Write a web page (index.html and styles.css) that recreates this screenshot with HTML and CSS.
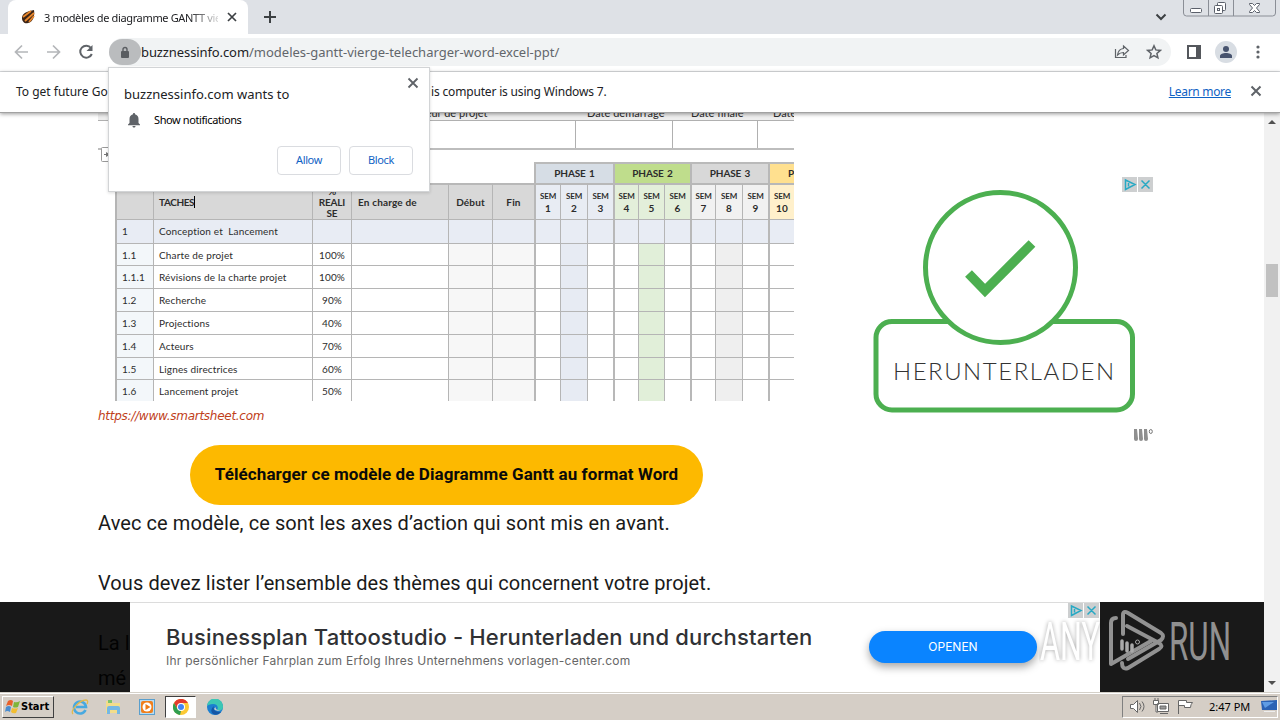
FILE: index.html
```html
<!DOCTYPE html>
<html lang="fr">
<head>
    <meta charset="UTF-8">
    <title>3 modèles de diagramme GANTT vierge</title>
    <link rel="stylesheet" href="styles.css">
</head>
<body>
    <div class="tabstrip">
        <div class="tab">
            <svg class="favicon" width="14" height="16" viewBox="0 0 14 16"><path d="M1 9C1 4 7 2 13 1c1 6-1 12-6 13-3 1-6-1-6-5z" fill="#3b2416"/><path d="M2 8l8-6M4 12l9-8M8 13l5-6" stroke="#e8872d" stroke-width="1.8"/></svg>
            <span class="tab-title">3 modèles de diagramme GANTT vier</span>
            <svg class="tab-close" width="10" height="10" viewBox="0 0 10 10"><path d="M1 1l8 8M9 1L1 9" stroke="#3c4043" stroke-width="1.7"/></svg>
        </div>
        <svg class="tab-new" width="12" height="12" viewBox="0 0 12 12"><path d="M6 0v12M0 6h12" stroke="#3c4043" stroke-width="2"/></svg>
        <svg class="tab-search" width="12" height="8" viewBox="0 0 12 8"><path d="M1.5 1.5L6 6l4.500-4.500" fill="none" stroke="#3c4043" stroke-width="2"/></svg>
        <svg class="win-buttons" width="94" height="18" viewBox="0 0 94 18">
            <path d="M.5 0v13q0 3 3 3h86q3 0 3-3V0M25.500 0v16M50.500 0v16" fill="none" stroke="#8a8e96"/>
            <g fill="#fff" stroke="#5b606b">
                <rect x="7.500" y="8.500" width="11" height="4" rx="1"/>
                <rect x="34.500" y="2.500" width="8" height="8" rx="1"/>
                <rect x="31.500" y="5.500" width="8" height="8" rx="1"/>
                <rect x="34.500" y="8.500" width="2" height="2"/>
                <path d="M66.500 3.500h3l2 2 2-2h3v1L73.500 8l3 3.500v1h-3l-2-2-2 2h-3v-1l3-3.500-3-3.500z"/>
            </g>
        </svg>
    </div>

    <div class="toolbar">
        <svg class="nav-icons" width="84" height="16" viewBox="0 0 84 16">
            <path d="M14 8H1.500M8 1.500L1.500 8 8 14.500M33 8h12.500M39 1.500L45.500 8 39 14.500" fill="none" stroke="#b4b6b9" stroke-width="1.700"/>
            <path d="M77 4A6 6 0 1 0 77.800 10" fill="none" stroke="#5f6368" stroke-width="2"/>
            <path d="M78.500 1v6h-6z" fill="#5f6368"/>
        </svg>
        <div class="omnibox">
            <span class="lock"><svg width="10" height="13" viewBox="0 0 10 13"><rect x="1" y="5" width="8" height="7" rx="1" fill="#5a5d61"/><path d="M3 5V3.500a2 2 0 0 1 4 0V5" fill="none" stroke="#5a5d61" stroke-width="1.400"/></svg></span>
            <span class="url"><b>buzznessinfo.com</b>/modeles-gantt-vierge-telecharger-word-excel-ppt/</span>
            <svg class="share" width="16" height="16" viewBox="0 0 16 16"><path d="M1.500 5v8.500H12V11" fill="none" stroke="#5f6368" stroke-width="1.200"/><path d="M9.500 2l5 4.500-5 4.500V8.500c-3 0-4.500 1-6 2.500.5-3.500 2-6 6-6.500z" fill="none" stroke="#5f6368" stroke-width="1.200"/></svg>
            <svg class="star" width="16" height="16" viewBox="0 0 16 16"><path d="M8 1.800l1.800 4.100 4.500.5-3.400 3 1 4.400L8 11.500l-3.900 2.300 1-4.400-3.400-3 4.500-.5z" fill="none" stroke="#5f6368" stroke-width="1.500"/></svg>
        </div>
        <svg class="side-panel" width="14" height="14" viewBox="0 0 14 14"><rect x="1" y="1" width="12" height="12" fill="none" stroke="#54575c" stroke-width="2"/><path d="M9 1h4v12H9z" fill="#54575c"/></svg>
        <span class="avatar"><svg width="14" height="14" viewBox="0 0 14 14"><circle cx="7" cy="4" r="3" fill="#47536e"/><path d="M1 13v-2c0-2 3-3 6-3s6 1 6 3v2z" fill="#47536e"/></svg></span>
        <svg class="menu-dots" width="4" height="14" viewBox="0 0 4 14" fill="#5f6368"><circle cx="2" cy="2" r="1.600"/><circle cx="2" cy="7" r="1.600"/><circle cx="2" cy="12" r="1.600"/></svg>
    </div>

    <div class="infobar">
        <span class="info-start">To get future Go</span>
        <span class="info-end">is computer is using Windows 7.</span>
        <a class="learn">Learn more</a>
        <svg width="12" height="12" viewBox="0 0 12 12"><path d="M1.500 1.500l9 9M10.500 1.500l-9 9" stroke="#5f6368" stroke-width="2"/></svg>
    </div>

    <div class="popup">
        <svg class="popup-close" width="12" height="12" viewBox="0 0 12 12"><path d="M1.500 1.500l9 9M10.500 1.500l-9 9" stroke="#5f6368" stroke-width="1.800"/></svg>
        <div class="popup-title">buzznessinfo.com wants to</div>
        <div class="popup-row">
            <svg width="12" height="15" viewBox="0 0 12 15"><path d="M6 0c.8 0 1 .6 1 1.200 2.300.6 3.500 2.300 3.500 4.800v4l1.500 1.500v.8H0v-.8L1.500 10V6C1.500 3.500 2.700 1.800 5 1.200 5 .6 5.200 0 6 0zM4.500 13h3c0 1-.7 1.600-1.500 1.600S4.500 14 4.500 13z" fill="#5f6368"/></svg>
            <span>Show notifications</span>
        </div>
        <div class="popup-buttons">
            <button>Allow</button>
            <button>Block</button>
        </div>
    </div>

    <div class="viewport">
        <div class="page">
            <div class="article">
                <div class="figure">
                    <div class="project-labels">
                        <span class="pl-1">Directeur de projet</span>
                        <span class="pl-2">Date démarrage</span>
                        <span class="pl-3">Date finale</span>
                        <span class="pl-4">Date</span>
                    </div>
                    <div class="project-cells"><i></i><i></i><i></i><i></i></div>
                    <div class="anchor-line"><svg width="10" height="16" viewBox="0 0 10 16"><rect x=".5" y=".5" width="14" height="14" rx="1" fill="#fff" stroke="#999"/><path d="M3 7.500h4" stroke="#777"/><path d="M5 5l4 2.500L5 10z" fill="#777"/></svg></div>
                    <div class="phases">
                        <div class="phase blue">PHASE 1</div>
                        <div class="phase green">PHASE 2</div>
                        <div class="phase grey">PHASE 3</div>
                        <div class="phase yellow">P</div>
                    </div>
                    <div class="gantt" id="gantt"></div>
                </div>
                <div class="caption">https://www.smartsheet.com</div>
                <a class="download"><span>Télécharger ce modèle de Diagramme Gantt au format Word</span></a>
                <p>Avec ce modèle, ce sont les axes d’action qui sont mis en avant.</p>
                <p>Vous devez lister l’ensemble des thèmes qui concernent votre projet.</p>
                <p>La l<br>mé</p>
            </div>
            <div class="side-ad">
                <div class="ad-badges">
                    <svg width="31" height="15" viewBox="0 0 31 15"><path d="M0 0h15v15H0zM16 0h15v15H16z" fill="#cdcfd0"/><path d="M3.500 3v9.500l9.500-5zM6.500 6v3.500M19.500 3.500l8 8M27.500 3.500l-8 8" fill="none" stroke="#27a9c4" stroke-width="1.500"/></svg>
                </div>
                <svg class="ad-art" width="262" height="224" viewBox="0 0 262 224">
                    <rect x="3" y="132.500" width="256.500" height="88.500" rx="16" fill="#fff" stroke="#4caf50" stroke-width="5"/>
                    <circle cx="127.500" cy="78.500" r="75" fill="#fff" stroke="#4caf50" stroke-width="5"/>
                    <path d="M95.500 84.500l16.500 17 47-47" fill="none" stroke="#4caf50" stroke-width="9.500"/>
                    <text x="20" y="191" textLength="221">HERUNTERLADEN</text>
                </svg>
                <svg class="ad-mark" width="22" height="15" viewBox="0 0 22 15"><path d="M2 1h3l1 10q0 2-2 2t-2-2zM7 1h3l1 10q0 2-2 2t-2-2zM12 1h3l1 10q0 2-2 2t-2-2z" fill="#8f8f8f"/><ellipse cx="18.800" cy="3.500" rx="1.500" ry="2" fill="none" stroke="#777"/></svg>
            </div>
            <div class="banner-wrap">
                <div class="banner">
                    <div class="banner-text">
                        <div class="banner-title">Businessplan Tattoostudio - Herunterladen und durchstarten</div>
                        <div class="banner-sub">Ihr persönlicher Fahrplan zum Erfolg Ihres Unternehmens vorlagen-center.com</div>
                    </div>
                    <button class="open">OPENEN</button>
                    <svg class="banner-badges" width="31" height="15" viewBox="0 0 31 15"><path d="M0 0h15v15H0zM16 0h15v15H16z" fill="#cdcfd0"/><path d="M3.500 3v9.500l9.500-5zM6.500 6v3.500M19.500 3.500l8 8M27.500 3.500l-8 8" fill="none" stroke="#27a9c4" stroke-width="1.500"/></svg>
                </div>
            </div>
            <svg class="watermark" width="194" height="66" viewBox="0 0 194 66">
                <text class="wm-any" x="1" y="52" textLength="60" lengthAdjust="spacingAndGlyphs">ANY</text>
                <text class="wm-run" x="130" y="52" textLength="62" lengthAdjust="spacingAndGlyphs">RUN</text>
                <g fill="none" stroke="#929292" stroke-width="4" stroke-linejoin="round" stroke-linecap="round">
                    <path d="M77 10q-5 0-5 5v41l40-23"/>
                    <path d="M84 26V7q0-5 5-2l33 20q4 3 0 7L89 51"/>
                    <path d="M88 18l32 17q5 3 0 6L89 60q-6 2-6-5"/>
                </g>
                <path d="M83 33v8M88 35v8M93 37v6" stroke="#aaa" stroke-width="3.500" stroke-linecap="round"/>
                <circle cx="98.500" cy="34" r="2" fill="none" stroke="#aaa"/>
            </svg>
        </div>
        <div class="scrollbar">
            <i class="up"></i>
            <div class="thumb"></div>
            <i class="down"></i>
        </div>
    </div>

    <div class="taskbar">
        <div class="start">
            <svg width="16" height="15" viewBox="0 0 16 15"><path d="M3 2q3-2 5 0L7 7Q4 5 1 7z" fill="#e9602a"/><path d="M9 3q3 1 6-1l-2 6q-3 1-5 0z" fill="#7fb539"/><path d="M1 8q3-2 5 0l-1 5q-3-2-5 0z" fill="#4a8ccf"/><path d="M7 9q3 1 6 0l-2 5q-3 1-5-1z" fill="#f2bd30"/></svg>
            <span>Start</span>
        </div>
        <svg class="t-ie" width="18" height="18" viewBox="0 0 18 18"><path d="M14.500 12A6 6 0 1 1 15 9H5" fill="none" stroke="#48a9e0" stroke-width="2.600"/><path d="M2 16C-1 13 8 2 15 2c2 0 2 2 1 4" fill="none" stroke="#e3b94c" stroke-width="1.300"/></svg>
        <svg class="t-files" width="17" height="16" viewBox="0 0 17 16"><path d="M1 2h6l1 2h7v10H1z" fill="#f3dd8a"/><path d="M3 1h4v3H3z" fill="#7ec36a"/><path d="M2 15V9q0-2 2-2h9q2 0 2 2v6h-3v-4H5v4z" fill="#75b8e4"/></svg>
        <svg class="t-media" width="16" height="16" viewBox="0 0 16 16"><rect x=".5" y=".5" width="15" height="15" fill="#b9dcf2" stroke="#5a9fcd"/><rect x="2" y="2" width="12" height="12" rx="2" fill="#f07f1c"/><circle cx="8" cy="8" r="4.500" fill="#fff"/><path d="M6.500 5l5 3-5 3z" fill="#ed7b16"/></svg>
        <div class="t-active">
            <svg width="16" height="16" viewBox="0 0 16 16"><circle cx="8" cy="8" r="8" fill="#fcc934"/><path d="M1 4a8 8 0 0 1 14 0H8L4.500 10z" fill="#e33b2e"/><path d="M1 4l3.500 6L8 12l-1 4A8 8 0 0 1 1 4z" fill="#2f9e4f"/><circle cx="8" cy="8" r="4" fill="#fff"/><circle cx="8" cy="8" r="3" fill="#4285f4"/></svg>
        </div>
        <svg class="t-edge" width="16" height="16" viewBox="0 0 16 16"><circle cx="8" cy="8" r="8" fill="#1c7fd0"/><path d="M0 7a8 8 0 0 1 16 1c0 3-3 4-6 3 2-3 0-6-4-6-3 0-5 1-6 2z" fill="#3cc7b4"/><path d="M7 7q-2 6 7 6-3 4-8 2-4-4 1-8z" fill="#1556a5"/><path d="M8.500 8q0 4 6.500 3-6 2-8-1z" fill="#d5cec6"/></svg>
        <div class="tray">
            <svg width="75" height="18" viewBox="0 0 75 18" fill="#fff" stroke="#666">
                <path d="M2.500 6.500h3l4-4v12l-4-4h-3z"/><path d="M11.500 5q3 3.500 0 7M14 3.500q4 5 0 10" fill="none"/>
                <path d="M29.500 5.500h11v8h-11zM32 15.500h8M25.500 2.500h5v4h-5zM28 7v7h2M27 0v3M30 0v3"/><path d="M32 8h6v3h-6z" fill="#999"/>
                <path d="M50.500 16V2.500h8v2h6q-2 2-2 5h-6v-2h-6"/>
            </svg>
            <span>2:47 PM</span>
            <svg class="desk" width="16" height="13" viewBox="0 0 16 13"><path d="M0 1l16-1v10H1z" fill="#2b62b4"/><path d="M1 2h12L4 8z" fill="#5f9ce4"/><path d="M3 11h11v1H3z" fill="#eee"/></svg>
        </div>
    </div>

    <script>
        const gantt = document.getElementById('gantt');
        const rows = [
            ['1', 'Conception et&nbsp; Lancement', ''],
            ['1.1', 'Charte de projet', '100%'],
            ['1.1.1', 'Révisions de la charte projet', '100%'],
            ['1.2', 'Recherche', '90%'],
            ['1.3', 'Projections', '40%'],
            ['1.4', 'Acteurs', '70%'],
            ['1.5', 'Lignes directrices', '60%'],
            ['1.6', 'Lancement projet', '50%']
        ];

        let html = '';
        ['', '<span class="typed">TACHES</span>', '%<br>REALI<br>SE', 'En charge de', 'Début', 'Fin'].forEach((t, i) => {
            html += `<div class="cell head h${i}">${t}</div>`;
        });
        for (let s = 1; s <= 10; s++) {
            html += `<div class="cell sem g${Math.ceil(s / 3)} ${s % 3 === 1 ? 'thick' : ''}"><small>SEM</small>${s}</div>`;
        }
        rows.forEach((row, r) => {
            for (let c = 0; c < 16; c++) {
                let cls = 'cell c' + c;
                if (r === 0) cls += ' summary';
                if (c >= 6 && c % 3 === 0) cls += ' thick';
                html += `<div class="${cls}"><span>${row[c] || ''}</span></div>`;
            }
        });
        gantt.innerHTML = html;
    </script>
</body>
</html>
```
FILE: styles.css
```css
*{
    margin: 0;
    padding: 0;
    box-sizing: border-box;
}
body{
    width: 1280px;
    height: 720px;
    overflow: hidden;
    position: relative;
    display: flex;
    flex-direction: column;
    background-color: #fff;
    font-family: "Noto Sans", sans-serif;
    font-size: 12px;
    color: #202124;
}
svg{
    display: block;
    flex: none;
}
span, div, a, button{
    white-space: nowrap;
}

/* browser window */
.tabstrip{
    height: 34px;
    flex: none;
    background-color: #dee1e6;
    display: flex;
    align-items: center;
}
.tab{
    width: 240px;
    height: 34px;
    margin-left: 8px;
    border-radius: 8px 8px 0 0;
    background-color: #fff;
    display: flex;
    align-items: center;
}
.favicon{
    margin-left: 13px;
}
.tab-title{
    width: 174px;
    margin-left: 9px;
    overflow: hidden;
    font-size: 11px;
    letter-spacing: -0.35px;
    -webkit-mask-image: linear-gradient(to right, #000 145px, transparent 180px);
}
.tab-close{
    margin-left: 9px;
}
.tab-new{
    margin-left: 16px;
}
.tab-search{
    margin-left: 879px;
}
.win-buttons{
    margin-left: 16px;
    align-self: flex-start;
}
.toolbar{
    height: 38px;
    flex: none;
    display: flex;
    align-items: center;
    padding-bottom: 1px;
    border-bottom: 1px solid #dcdee1;
}
.nav-icons{
    margin-left: 14px;
}
.omnibox{
    width: 1062px;
    height: 28px;
    margin-left: 11px;
    border-radius: 14px;
    background-color: #f1f3f4;
    display: flex;
    align-items: center;
}
.lock{
    width: 32px;
    height: 26px;
    border-radius: 13px;
    background-color: #babcbe;
    display: flex;
    align-items: center;
    justify-content: center;
}
.url{
    width: 973px;
    font-size: 13px;
    color: #62666b;
}
.url b{
    font-weight: 400;
    color: #202124;
    letter-spacing: -0.1px;
}
.star{
    margin-left: 16px;
}
.side-panel{
    margin-left: 16px;
}
.avatar{
    width: 22px;
    height: 22px;
    margin-left: 14px;
    border-radius: 50%;
    background-color: #d8dde3;
    display: flex;
    align-items: center;
    justify-content: center;
}
.menu-dots{
    margin-left: 19px;
}
.infobar{
    height: 41px;
    flex: none;
    display: flex;
    align-items: center;
    padding: 0 18px 2px 16px;
    border-bottom: 1px solid #a2a2a2;
    box-shadow: 0 1px 4px rgba(0,0,0,0.4);
    position: relative;
    z-index: 2;
    background-color: #fff;
    letter-spacing: -0.17px;
}
.info-start{
    width: 415px;
    letter-spacing: 0;
}
.learn{
    margin-left: auto;
    margin-right: 19px;
    color: #0f62c4;
    text-decoration: underline;
    letter-spacing: -0.3px;
}

/* permission bubble, lies over the page */
.popup{
    position: absolute;
    left: 108px;
    top: 67px;
    z-index: 5;
    width: 322px;
    height: 125px;
    padding: 17px 16px 17px 15px;
    background-color: #fff;
    border: 1px solid #d2d4d6;
    box-shadow: 0 1px 3px rgba(0,0,0,0.15);
}
.popup-close{
    position: absolute;
    right: 10px;
    top: 9px;
}
.popup-title{
    font-size: 13px;
    line-height: 18px;
}
.popup-row{
    display: flex;
    align-items: center;
    gap: 14px;
    height: 16px;
    margin: 9px 0 0 4px;
    font-size: 11px;
    letter-spacing: -0.4px;
    color: #000;
}
.popup-row span{
    padding-bottom: 2px;
}
.popup-buttons{
    display: flex;
    justify-content: flex-end;
    gap: 8px;
    margin-top: 18px;
}
.popup-buttons button{
    width: 64px;
    height: 29px;
    padding-bottom: 2px;
    border: 1px solid #dadce0;
    border-radius: 4px;
    background-color: #fff;
    font: 11px "Noto Sans", sans-serif;
    letter-spacing: -0.4px;
    color: #0f62c4;
}

/* page */
.viewport{
    height: 579px;
    flex: none;
    display: flex;
}
.page{
    width: 1264px;
    height: 579px;
    position: relative;
    overflow: hidden;
    display: flex;
}
.article{
    width: 696px;
    margin-left: 98px;
    font-family: Roboto, sans-serif;
}
.figure{
    height: 288px;
    overflow: hidden;
    font-family: Lato, sans-serif;
    font-size: 10px;
    color: #2c2c2c;
}
.project-labels{
    height: 7px;
    display: grid;
    grid-template-columns: 477px 97px 85px 37px;
    background-color: #eee;
    line-height: 12px;
    font-size: 11px;
}
.project-labels span{
    margin-top: -6px;
}
.pl-1{
    padding-left: 298px;
}
.pl-2{
    padding-left: 12px;
}
.pl-3{
    padding-left: 19px;
}
.pl-4{
    padding-left: 16px;
}
.project-cells{
    height: 30px;
    display: grid;
    grid-template-columns: 477px 97px 85px 37px;
    border-top: 1px solid #b0b0b0;
    border-bottom: 2px solid #bdbdbd;
}
.project-cells i + i{
    border-left: 1px solid #b0b0b0;
}
.anchor-line{
    height: 12px;
    padding-left: 3px;
    margin-top: -3px;
    margin-bottom: 3px;
}
.phases{
    height: 21px;
    margin-left: 436px;
    display: grid;
    grid-template-columns: 79px 77px 78px 26px;
    border-top: 2px solid #bababa;
}
.phase{
    border-left: 2px solid #b8b8b8;
    padding-bottom: 2px;
    display: flex;
    align-items: center;
    justify-content: center;
    font-weight: 700;
    letter-spacing: -0.55px;
    word-spacing: 1px;
}
.blue{
    background-color: #d6dde5;
}
.green{
    background-color: #bfdd8c;
}
.grey{
    background-color: #d8d8d8;
}
.yellow{
    background-color: #ffe08f;
    justify-content: flex-end;
}
.phase{
    letter-spacing: -0.1px;
}
.gantt{
    width: 679px;
    margin-left: 17px;
    display: grid;
    grid-template-columns: 38px 159px 39px 97px 44px 42px 26px 27px 26px 25px 26px 26px 25px 27px 26px 26px;
    grid-template-rows: 36px 24px 22px 23px 23px 23px 23px 22px 22px;
}
.cell{
    border-left: 1px solid #b5b5b5;
    border-top: 1px solid #b5b5b5;
    display: flex;
    align-items: center;
    overflow: hidden;
    letter-spacing: 0.15px;
}
.head{
    border-top: 2px solid #b8b8b8;
    background-color: #d8d8d8;
    font-weight: 700;
}
.h0, .c0{
    border-left: 2px solid #b5b5b5;
}
.h1, .h3, .c0, .c1{
    padding-left: 6px;
}
.h1, .c1{
    padding-left: 5px;
}
.c0{
    padding-left: 5px;
    background-color: #f3f7fa;
}
.typed{
    border-right: 1px solid #000;
    letter-spacing: -0.4px;
}
.h2{
    text-align: center;
    line-height: 11px;
    letter-spacing: -0.2px;
}
.h2, .h4, .h5, .c2{
    justify-content: center;
}
.sem{
    flex-direction: column;
    justify-content: center;
    border-top: 2px solid #b8b8b8;
    font-weight: 700;
    line-height: 12px;
}
.sem small{
    font-size: 8px;
    letter-spacing: -0.1px;
}
.g1{
    background-color: #e8ecf3;
}
.g2{
    background-color: #e3efda;
}
.g3{
    background-color: #f1f1f1;
}
.g4{
    background-color: #fff0cb;
}
.c4, .c5{
    background-color: #f7f7f7;
}
.c7{
    background-color: #e7ebf3;
}
.c10{
    background-color: #e1efd9;
}
.c13{
    background-color: #efefef;
}
.summary{
    background-color: #e8ecf4;
    padding-bottom: 2px;
}
.thick{
    border-left: 2px solid #b8b8b8;
}
.caption{
    height: 44px;
    line-height: 30px;
    font-family: "DejaVu Sans", sans-serif;
    font-size: 12px;
    font-style: italic;
    letter-spacing: -0.27px;
    color: #c0401a;
}
.download{
    width: 513px;
    height: 60px;
    margin: 0 0 1px 92px;
    padding-bottom: 2px;
    border-radius: 30px;
    background-color: #fdb900;
    display: flex;
    align-items: center;
    justify-content: center;
    font-size: 17px;
    font-weight: 700;
    letter-spacing: 0.09px;
    color: #0a0a0a;
}
.article p{
    margin-bottom: 25px;
    line-height: 35px;
    font-size: 20px;
    letter-spacing: 0.08px;
    color: #1a1a1a;
    white-space: nowrap;
}
.side-ad{
    width: 290px;
    padding-top: 64px;
    margin-left: 79px;
}
.ad-badges{
    margin-left: 249px;
    height: 12px;
}
.ad-art text{
    font-family: Lato, sans-serif;
    font-weight: 300;
    font-size: 24px;
    fill: #333;
}
.ad-mark{
    margin: 15px 0 0 259px;
}

/* sticky ad over the bottom of the page */
.banner-wrap{
    position: absolute;
    left: 0;
    right: 0;
    bottom: 0;
    height: 90px;
    padding: 0 164px 0 130px;
    background-color: rgba(0,0,0,0.9);
}
.banner{
    height: 90px;
    padding: 0 63px 2px 36px;
    border-top: 1px solid #dcdcdc;
    background-color: #fff;
    position: relative;
    display: flex;
    align-items: center;
    justify-content: space-between;
}
.banner-title{
    font-family: Inter, sans-serif;
    font-weight: 500;
    font-size: 22px;
    line-height: 28px;
    letter-spacing: 0.17px;
    color: #303134;
}
.banner-sub{
    font-family: Inter, sans-serif;
    font-size: 12px;
    line-height: 20px;
    letter-spacing: 0.24px;
    color: #666;
}
.open{
    width: 168px;
    height: 32px;
    border: none;
    border-radius: 16px;
    background-color: #0a84ff;
    box-shadow: 0 4px 8px rgba(0,0,0,0.35);
    color: #fff;
    font: 12px Inter, sans-serif;
}
.banner-badges{
    position: absolute;
    right: 1px;
    top: 0;
}
.watermark{
    position: absolute;
    left: 1039px;
    top: 495px;
}
.watermark text{
    font-family: Roboto, sans-serif;
    font-size: 53px;
    fill: #909090;
}
.watermark .wm-any{
    fill: #fff;
    filter: drop-shadow(0 0 2px rgba(0,0,0,0.35));
}
.scrollbar{
    width: 16px;
    background-color: #f1f1f1;
    display: flex;
    flex-direction: column;
    align-items: center;
    justify-content: space-between;
    padding: 7px 0;
}
.scrollbar i{
    border: 4px solid transparent;
}
.scrollbar .up{
    border-top: none;
    border-bottom-color: #505050;
}
.scrollbar .down{
    border-bottom: none;
    border-top-color: #505050;
}
.thumb{
    width: 12px;
    height: 33px;
    margin-bottom: 245px;
    background-color: #c1c1c1;
}

/* desktop taskbar */
.taskbar{
    height: 28px;
    flex: none;
    display: flex;
    align-items: center;
    padding: 3px 2px 3px;
    background-color: #d5cec6;
    border-top: 1px solid #d4d0c8;
    box-shadow: inset 0 1px 0 #fff;
}
.start{
    width: 52px;
    height: 22px;
    padding-left: 2px;
    display: flex;
    align-items: center;
    border: 1px solid;
    border-color: #fff #404040 #404040 #fff;
    font-family: "DejaVu Sans Condensed", "DejaVu Sans", sans-serif;
    font-stretch: condensed;
    font-weight: 700;
    font-size: 11px;
    color: #000;
}
.t-ie{
    margin-left: 17px;
}
.t-files{
    margin-left: 16px;
}
.t-media{
    margin-left: 17px;
}
.t-active{
    width: 31px;
    height: 22px;
    margin-left: 10px;
    background-color: #fff;
    border: 1px solid;
    border-color: #404040 #fff #fff #404040;
    display: flex;
    align-items: center;
    justify-content: center;
}
.t-edge{
    margin-left: 11px;
}
.tray{
    width: 156px;
    height: 22px;
    margin-left: auto;
    padding-left: 5px;
    display: flex;
    align-items: center;
    border: 1px solid;
    border-color: #808080 #fff #fff #808080;
    font-size: 11px;
    color: #000;
}
.tray span{
    margin-left: 6px;
}
.desk{
    margin-left: auto;
}
```
